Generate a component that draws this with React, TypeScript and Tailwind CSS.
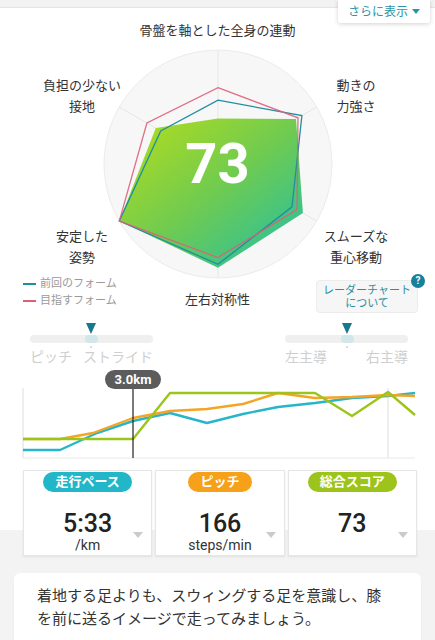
import React from 'react';

const CX = 115;
const CY = 115;
const R = 114;
const ANGLES = [-90, -30, 30, 90, 150, 210];

const toPoints = (vals: number[]) =>
  vals
    .map((v, i) => {
      const a = (ANGLES[i] * Math.PI) / 180;
      return `${(CX + v * R * Math.cos(a)).toFixed(1)},${(CY + v * R * Math.sin(a)).toFixed(1)}`;
    })
    .join(' ');

const current = [0.4, 0.79, 0.86, 0.91, 1.0, 0.63];
const previous = [0.56, 0.85, 0.75, 0.88, 1.0, 0.58];
const target = [0.67, 0.81, 0.8, 0.82, 1.0, 0.72];

const RadarChart: React.FC = () => (
  <div className="relative mx-auto mt-[8px] h-[230px] w-[230px]">
    <svg width="230" height="230" viewBox="0 0 230 230" className="block">
      <defs>
        <linearGradient id="radarFill" x1="0" y1="0" x2="1" y2="1">
          <stop offset="0%" stopColor="#b8de1a" />
          <stop offset="50%" stopColor="#70cb50" />
          <stop offset="100%" stopColor="#1fbfa8" />
        </linearGradient>
      </defs>
      <circle cx={CX} cy={CY} r={R} fill="#f7f7f7" stroke="#ebebeb" strokeWidth="1" />
      {ANGLES.map((deg) => {
        const a = (deg * Math.PI) / 180;
        return (
          <line
            key={deg}
            x1={CX}
            y1={CY}
            x2={CX + R * Math.cos(a)}
            y2={CY + R * Math.sin(a)}
            stroke="#e6e6e6"
            strokeWidth="1"
          />
        );
      })}
      <polygon points={toPoints(current)} fill="url(#radarFill)" />
      <polygon points={toPoints(previous)} fill="none" stroke="#1f8ea0" strokeWidth="1.3" />
      <polygon points={toPoints(target)} fill="none" stroke="#de5f7a" strokeWidth="1.3" strokeOpacity="0.9" />
    </svg>
    <div className="absolute inset-0 flex items-center justify-center text-[56px] font-bold leading-none text-white">
      73
    </div>
  </div>
);

const Slider: React.FC<{ left: string; right: string; pos: number }> = ({ left, right, pos }) => (
  <div className="flex w-[123px] flex-col">
    <div className="relative h-[12px]">
      <svg
        width="10"
        height="11"
        viewBox="0 0 10 11"
        className="absolute top-0"
        style={{ left: pos - 5 }}
      >
        <polygon points="0,0 10,0 5,11" fill="#16798e" />
      </svg>
    </div>
    <div className="relative h-[8px] rounded-full bg-[#efefef]">
      <div className="absolute top-0 h-[8px] w-[13px] rounded-full bg-[#d2e6ec]" style={{ left: pos - 6 }} />
    </div>
    <div className="relative h-[5px]">
      <div className="absolute top-[3px] h-[2px] w-[2px] rounded-full bg-[#cfcfcf]" style={{ left: pos - 1 }} />
    </div>
    <div className="flex justify-between text-[14px] leading-[18px] text-[#cfcfcf]">
      <span>{left}</span>
      <span>{right}</span>
    </div>
  </div>
);

const teal = [
  [23, 84], [60, 84], [97, 67], [133, 55], [170, 47], [207, 57], [243, 48], [278, 41], [315, 37], [352, 32], [388, 30], [415, 27],
];
const orange = [
  [23, 73], [60, 73], [93, 67], [133, 52], [170, 45], [207, 43], [243, 38], [278, 27], [315, 32], [352, 31], [388, 29], [415, 30],
];
const green = [
  [23, 73], [60, 73], [133, 73], [170, 27], [315, 27], [352, 50], [388, 26], [415, 49],
];
const pts = (arr: number[][]) => arr.map(([x, y]) => `${x},${y}`).join(' ');

const LineChart: React.FC = () => (
  <div className="relative h-[94px]">
    <svg width="435" height="94" viewBox="0 0 435 94" className="block">
      <line x1="23" y1="22" x2="23" y2="92" stroke="#dedede" strokeWidth="1" />
      <line x1="388" y1="22" x2="388" y2="92" stroke="#dedede" strokeWidth="1" />
      <line x1="23" y1="92" x2="415" y2="92" stroke="#e8e8e8" strokeWidth="1" />
      <polyline points={pts(teal)} fill="none" stroke="#27b5c9" strokeWidth="2.4" strokeLinejoin="round" />
      <polyline points={pts(orange)} fill="none" stroke="#f5a524" strokeWidth="2.4" strokeLinejoin="round" />
      <polyline points={pts(green)} fill="none" stroke="#9cc51c" strokeWidth="2.4" strokeLinejoin="round" />
      <line x1="133" y1="22" x2="133" y2="92" stroke="#222" strokeWidth="1.2" />
    </svg>
    <div className="absolute left-[105px] top-[4px] flex h-[19px] w-[56px] items-center justify-center rounded-full bg-[#5c5c5c] text-[13px] font-bold text-white">
      3.0km
    </div>
  </div>
);

const Caret: React.FC = () => (
  <svg width="10" height="6" viewBox="0 0 10 6" className="absolute bottom-[17px] right-[8px]">
    <polygon points="0,0 10,0 5,6" fill="#cbcbcb" />
  </svg>
);

const StatCard: React.FC<{ label: string; pill: string; value: string; unit?: string }> = ({ label, pill, value, unit }) => (
  <div className="relative flex h-[86px] flex-col items-center border border-[#e6e6e6] bg-white shadow-[0_1px_2px_rgba(0,0,0,0.08)]">
    <div className={`mt-[1px] flex h-[20px] items-center rounded-full px-[12px] text-[13px] font-bold text-white ${pill}`}>
      {label}
    </div>
    <div className="mt-[20px] text-[25px] font-medium leading-[24px] text-[#222]">{value}</div>
    {unit && <div className="mt-[1px] text-[14px] leading-[16px] text-[#333]">{unit}</div>}
    <Caret />
  </div>
);

export default function App() {
  return (
    <div className="h-[640px] w-[435px] overflow-hidden bg-[#f3f3f3] font-['Roboto','Noto_Sans_CJK_JP',sans-serif] text-[#333]">
      <div className="bg-white">
        {/* top strip + dropdown */}
        <div className="relative">
          <div className="h-[8px] border-b border-[#e4e4e4] bg-[#f2f2f2]" />
          <div className="absolute right-[5px] top-0 flex h-[23px] w-[92px] items-center justify-center gap-[4px] rounded-b-[3px] bg-white text-[12px] text-[#2a94a6] shadow-[0_1px_4px_rgba(0,0,0,0.18)]">
            <span>さらに表示</span>
            <svg width="8" height="5" viewBox="0 0 8 5">
              <polygon points="0,0 8,0 4,5" fill="#2a94a6" />
            </svg>
          </div>
        </div>

        {/* radar */}
        <div className="relative">
          <div className="pt-[13px] text-center text-[13px] leading-[20px] text-[#333]">骨盤を軸とした全身の連動</div>
          <RadarChart />

          <div className="absolute left-[32px] top-[67px] w-[100px] text-center text-[13px] leading-[21px]">
            負担の少ない<br />接地
          </div>
          <div className="absolute left-[306px] top-[67px] w-[100px] text-center text-[13px] leading-[21px]">
            動きの<br />力強さ
          </div>
          <div className="absolute left-[32px] top-[218px] w-[100px] text-center text-[13px] leading-[21px]">
            安定した<br />姿勢
          </div>
          <div className="absolute left-[306px] top-[218px] w-[100px] text-center text-[13px] leading-[21px]">
            スムーズな<br />重心移動
          </div>

          <div className="grid h-[36px] grid-cols-[1fr_auto_1fr] items-start">
            <div className="mt-[-4px] flex flex-col pl-[23px] text-[11px] leading-[17px] text-[#9a9a9a]">
              <div className="flex items-center gap-[4px]">
                <span className="h-[2px] w-[13px] bg-[#1f8ea0]" />
                前回のフォーム
              </div>
              <div className="flex items-center gap-[4px]">
                <span className="h-[2px] w-[13px] bg-[#de5f7a]" />
                目指すフォーム
              </div>
            </div>
            <div className="mt-[11px] text-[13px] leading-[20px]">左右対称性</div>
            <div className="flex justify-end pr-[17px]">
              <div className="relative mt-[1px] flex h-[33px] w-[102px] flex-col items-center justify-center rounded-[4px] border border-[#ececec] bg-[#f6f6f6] text-[11px] leading-[13px] text-[#2a8ea2]">
                <span>レーダーチャート</span>
                <span>について</span>
                <div className="absolute right-[-8px] top-[-7px] flex h-[14px] w-[14px] items-center justify-center rounded-full bg-[#17809a] text-[10px] font-bold leading-none text-white">
                  ?
                </div>
              </div>
            </div>
          </div>
        </div>

        {/* sliders */}
        <div className="flex justify-between pl-[30px] pr-[27px] pt-[8px]">
          <Slider left="ピッチ" right="ストライド" pos={61} />
          <Slider left="左主導" right="右主導" pos={62} />
        </div>

        <LineChart />
      </div>

      {/* stat cards */}
      <div className="bg-[linear-gradient(#ffffff_0_70px,#f3f3f3_70px)] pl-[23px] pr-[18px] pt-[10px]">
        <div className="grid grid-cols-3 gap-[3px]">
          <StatCard label="走行ペース" pill="bg-[#22b6c9]" value="5:33" unit="/km" />
          <StatCard label="ピッチ" pill="bg-[#f7a11b]" value="166" unit="steps/min" />
          <StatCard label="総合スコア" pill="bg-[#9cc41a]" value="73" />
        </div>
      </div>

      {/* advice */}
      <div className="px-[14px] pt-[17px]">
        <div className="h-[100px] rounded-[6px] bg-white pl-[23px] pr-[36px] pt-[12px] text-[15px] leading-[23px] text-[#333] shadow-[0_1px_2px_rgba(0,0,0,0.06)]">
          着地する足よりも、スウィングする足を意識し、膝を前に送るイメージで走ってみましょう。
        </div>
      </div>
    </div>
  );
}
